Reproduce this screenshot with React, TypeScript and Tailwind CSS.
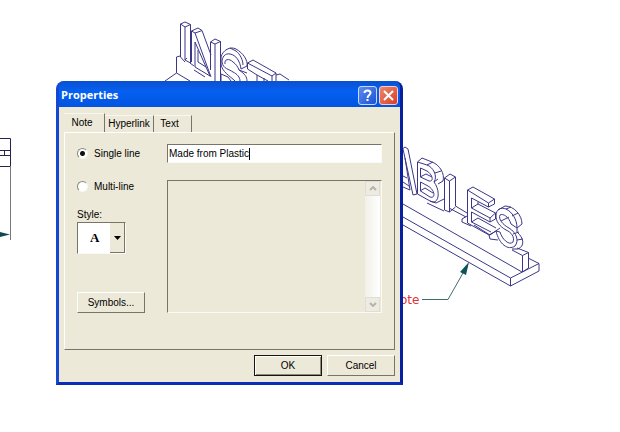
import { useState, type ReactNode } from 'react';

const sunken = 'border border-t-[#77756a] border-l-[#77756a] border-r-[#fbfaf4] border-b-[#fbfaf4]';
const raised = 'border border-t-white border-l-white border-r-[#77756a] border-b-[#77756a]';

const tabs = [
  { name: 'Note', className: 'w-[41px] h-[19px] pr-1 pb-px' },
  { name: 'Hyperlink', className: 'w-[49px] h-[17px]' },
  { name: 'Text', className: 'w-[38px] h-[17px] pr-1.5' },
];

function Drawing() {
  return (
    <svg className="absolute top-0 left-0" width="620" height="432" viewBox="0 0 620 432" fill="none" stroke="#3a3788" strokeWidth="1">
      {/* side view */}
      <g stroke="#27224f">
        <path d="M0 138.500H10.500V166M0 150.500H10M0 155.500H10M4.500 150V156M0 166.500H10" />
        <path d="M10.500 166V240" stroke="#77777f" />
        <path d="M0 232L10 234.500L0 237Z" fill="#0e4a50" stroke="none" />
      </g>

      {/* upper left end of the sign */}
      <path d="M180 56L176.500 57V73L165 81M176.500 73L190 81" />
      <path d="M180.500 24L185 22L190.500 24.500L185 27ZM180.500 24V57L185 62M185 27V60L190.500 63V24.500M185 60L187 58" />
      <path d="M191.500 31L198 28L202 30.500L211 55M191.500 31L195 33L198 32L202 30.500M191.500 31V62M195 33L211 77M195 42V67L210 76L195 42M190 63L194 66M194 70L205 77M198 50V62L206 67" />
      <path d="M210.500 42L215 39L220.500 41.500L215 44ZM210.500 42V70M215 44V81M220.500 41.500V81" />
      <path d="M221 57C223 50 230 46 236 49C243 53 248 60 247 66L241 69C240 61 236 55 230 54C225 53 222 57 222 62C223 69 229 69 233 72C237 74 240 77 240 81M221 57V64C222 72 230 76 235 81M225 64C224 59 229 58 233 62C236 64 238 67 239 70L247 73M230 48L236 51C240 54 243 60 243 65M239 70C245 74 247 77 247 81M221 74L228 77L231 81M221 74V81" />
      <path d="M247.500 63L253 60L276 73L272 76L247.500 63V69L257 75V81M272 76V81M276 73V81M264 78V81M257 75L268 81M276 75L280 74L289 80" />

      {/* A */}
      <path d="M401 150L405 147L408 149L417 194L413 195L403 149M405 158L410 190L403 187M399 174L407 178M403 182L409 186" />
      {/* B */}
      <path d="M417.500 162L422 158L432 162C440 165 445 174 443 181L438 184M417.500 162V194L430 201C439 206 441 191 434 182C438 176 433 167 427 165ZM420.500 168L427 171C433 175 434 182 429 181L420.500 177ZM420.500 182L428 186C435 190 436 199 430 197L420.500 191ZM427 165L433 162M435 173L441 171M420 177L426 174L432 177M420 191L425 188L433 193M427 203L444 211M434 182L438 179M430 201L436 203L444 199" />
      {/* L */}
      <path d="M444.500 178L450 174L455.500 177L449.500 181ZM444.500 178V210L449.500 212V181M455.500 177V206L467 213M449.500 212L455.500 207M449 208L466 217M462 219L467 216M462 219V222L471 226" />
      {/* E */}
      <path d="M467.500 190L473 187L494.500 199V204L488.500 207V203ZM467.500 190V223L489 235M488.500 203L494.500 199M488.500 207L471.500 198V208L490 218L495.500 213L478 204L471.500 208M490 218V222L495.500 219V213M490 222L471.500 212V222L491 232M471.500 222L478 218L496 228M478 204V202" />
      {/* S */}
      <path d="M496 216C496 209 501 207 506 209C512 212 517 219 517 228L511 224C509 217 503 213 500 215C498 219 503 225 509 228C517 233 519 241 515 246C508 251 499 244 496 231L500 232C502 239 509 246 513 242C515 237 511 232 506 230C499 226 496 221 496 216ZM498 210L505 206C514 206 522 215 522 224L517 228M506 209L511 207M512 216L518 213M517 228V232C524 238 525 246 518 249L512 249M513 234L519 232M496 231L489 235L490 239L498 240M490 235L500 228M501 221L509 217M517 240L523 239" />
      {/* base */}
      <path d="M403 204L522 272M403 217L510.500 278L539 263.500L528 258M403 225L510.500 286L539 271V263.500M510.500 278V286M474 225L490 235M517 248L528.500 252.500L522.500 255.500L512 250M522.500 255.500V272L528.500 268V252.500" />

      <path d="M422 299.500H448L463 273" stroke="#3e6c70" />
      <path d="M469 262L466 275L460 272Z" fill="#0d5358" stroke="none" />
    </svg>
  );
}

function PushButton({ children, isDefault = false }: { children: ReactNode; isDefault?: boolean }) {
  return (
    <button
      type="button"
      className={`flex h-[21px] w-[68px] items-center justify-center ${
        isDefault ? 'border border-[#16160f] shadow-[inset_1px_1px_#fff,inset_-1px_-1px_#8d8b7e]' : raised
      }`}
    >
      {children}
    </button>
  );
}

function ScrollArrow({ down = false }: { down?: boolean }) {
  return (
    <button type="button" aria-label={down ? 'Scroll down' : 'Scroll up'} className="flex h-[15px] w-full items-center justify-center border border-[#e0ded3] bg-[#eeece2]">
      <svg width="8" height="5" viewBox="0 0 8 5" fill="none" stroke="#b5b4ab" strokeWidth="2">
        <path d={down ? 'M1 1L4 4L7 1' : 'M1 4L4 1L7 4'} />
      </svg>
    </button>
  );
}

function TitleBar() {
  return (
    <header className="flex h-[26px] items-center justify-between rounded-t-md bg-linear-to-b from-[#0a50d0] via-[#0560f0] via-40% to-[#0254e0] pt-[2px] pr-[2px] pl-[2px]">
      <h1 className="font-['Open_Sans',sans-serif] text-[11px] leading-4 font-bold text-white">Properties</h1>
      <div className="flex gap-0.5">
        <button type="button" aria-label="Help" className="flex size-[19px] items-center justify-center rounded-[3px] border border-[#c8dafa] bg-linear-to-br from-[#5c8df2] to-[#1c50d2]">
          <svg width="13" height="13" viewBox="0 0 13 13" fill="none" stroke="#fff" strokeWidth="2">
            <path d="M3.500 4C3.500 0.500 9.500 0.500 9.500 4C9.500 6 6.500 6 6.500 9M6.500 10V12" />
          </svg>
        </button>
        <button type="button" aria-label="Close" className="flex size-[19px] items-center justify-center rounded-[3px] border border-[#f0cfd0] bg-linear-to-br from-[#ec8668] to-[#d83c2a]">
          <svg width="11" height="11" viewBox="0 0 11 11" stroke="#fff" strokeWidth="2">
            <path d="M1 1L10 10M10 1L1 10" />
          </svg>
        </button>
      </div>
    </header>
  );
}

function NotePanel() {
  const [mode, setMode] = useState('single');
  const [note, setNote] = useState('Made from Plastic');
  const radioClass =
    'size-[11px] appearance-none rounded-full border border-t-[#8a887c] border-l-[#8a887c] border-r-[#f8f7f0] border-b-[#f8f7f0] bg-white checked:bg-[radial-gradient(circle,#111_2px,#fff_3px)]';

  return (
    <section className={`flex h-[218px] pt-[11px] pr-3 pl-3 ${raised}`}>
      <div className="flex w-[90px] shrink-0 flex-col items-start">
        <label className="flex h-[19px] items-center gap-[6px]">
          <input type="radio" name="mode" className={radioClass} checked={mode === 'single'} onChange={() => setMode('single')} />
          Single line
        </label>
        <label className="mt-[14px] flex h-[19px] items-center gap-[6px]">
          <input type="radio" name="mode" className={radioClass} checked={mode === 'multi'} onChange={() => setMode('multi')} />
          Multi-line
        </label>
        <label htmlFor="style" className="mt-3 leading-[14px]">Style:</label>
        <div className={`relative flex h-8 w-[49px] ${sunken}`}>
          <select id="style" className="h-full w-full appearance-none bg-white pl-3 font-['Liberation_Serif',serif] text-[13px] font-bold">
            <option>A</option>
          </select>
          <span className="pointer-events-none absolute inset-y-0 right-0 flex w-[15px] items-center justify-center border-r border-b border-[#77756a] bg-[#ece9d8]">
            <svg width="7" height="4" viewBox="0 0 7 4">
              <path d="M0 0H7L3.500 4Z" />
            </svg>
          </span>
        </div>
        <div className="mt-[38px]">
          <PushButton>Symbols...</PushButton>
        </div>
      </div>
      <div className="flex min-w-0 flex-1 flex-col gap-[17px]">
        <div className={`flex h-[19px] items-center bg-white pl-px ${sunken}`}>
          <input aria-label="Note text" className="field-sizing-content outline-none" value={note} onChange={(e) => setNote(e.target.value)} />
          <span className="h-3 w-px bg-black" />
        </div>
        <div className={`flex h-[133px] ${sunken}`}>
          <textarea aria-label="Multi-line note" disabled className="min-w-0 flex-1 resize-none" />
          <div className="mr-px flex w-[15px] flex-col justify-between bg-linear-to-r from-[#f1f0e8] to-white">
            <ScrollArrow />
            <ScrollArrow down />
          </div>
        </div>
      </div>
    </section>
  );
}

export default function App() {
  return (
    <main className="relative min-h-screen overflow-hidden bg-white font-['Liberation_Sans',Arial,sans-serif] text-[10px] leading-[14px] text-black">
      <Drawing />
      <span className="absolute top-[293px] left-[391px] font-['DejaVu_Sans',sans-serif] text-[12px] text-[#e03038]">Note</span>

      <div role="dialog" aria-label="Properties" className="absolute top-[81px] left-[56px] w-[347px] rounded-t-lg border-x-[3px] border-b-[3px] border-l-[#1746d2] border-r-[#0820a0] border-b-[#0a2cb8] bg-[#0a50d0]">
        <TitleBar />
        <div className="bg-[#ece9d8] px-[5px] pt-[6px] pb-[6px]">
          <nav className="flex items-end">
            {tabs.map((tab) => (
              <button
                key={tab.name}
                type="button"
                className={`flex items-center justify-center border-t border-r border-t-[#f8f7ef] border-r-[#77756a] ${tab.className}`}
              >
                {tab.name}
              </button>
            ))}
          </nav>
          <NotePanel />
          <footer className="mt-[5px] flex justify-end gap-[5px]">
            <PushButton isDefault>OK</PushButton>
            <PushButton>Cancel</PushButton>
          </footer>
        </div>
      </div>
    </main>
  );
}
